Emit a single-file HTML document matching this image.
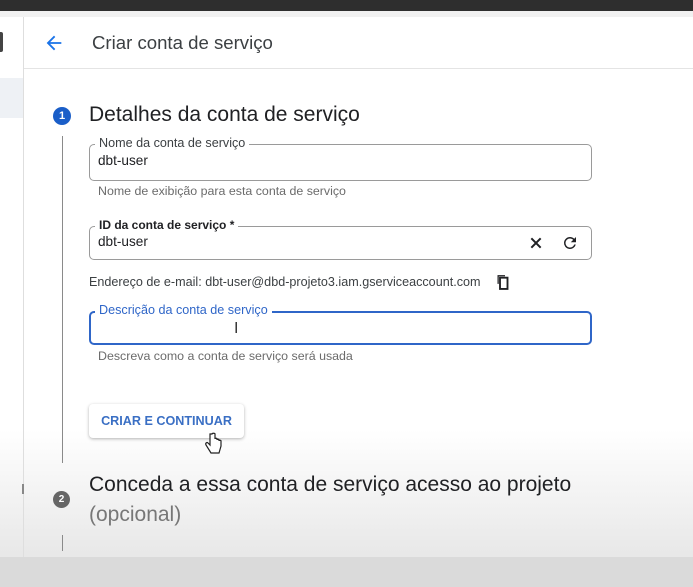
<!DOCTYPE html>
<html><head><meta charset="utf-8"><style>
*{margin:0;padding:0;box-sizing:border-box}
body{width:693px;height:587px;overflow:hidden;position:relative;font-family:"Liberation Sans",sans-serif;background:#fff;color:#202124}
.a{position:absolute}
.fld{position:absolute;left:89px;width:503px;border:1px solid #9a9a9a;border-radius:5px}
.lbl{position:absolute;left:5px;top:-9px;background:#fff;padding:0 4px;font-size:12.6px;color:#3c4043;white-space:nowrap}
.val{position:absolute;left:8px;font-size:13.6px;color:#202124}
.help{position:absolute;left:98px;font-size:12.4px;color:#6b6b6b}
</style></head><body>
<div class="a" style="left:0;top:0;width:693px;height:11px;background:#2e2e2e"></div>
<div class="a" style="left:0;top:11px;width:693px;height:6px;background:#f1f1f1"></div>
<div class="a" style="left:0;top:430px;width:693px;height:135px;background:linear-gradient(#fff,#e6e6e6)"></div>
<div class="a" style="left:0;top:557px;width:693px;height:30px;background:#dadada"></div>
<div class="a" style="left:0;top:78px;width:23px;height:40px;background:#eef1f5"></div>
<div class="a" style="left:0;top:32px;width:3px;height:20px;background:#444;border-radius:0 2px 2px 0"></div>
<div class="a" style="left:23px;top:17px;width:1px;height:540px;background:#dedede"></div>
<div class="a" style="left:24px;top:68px;width:669px;height:1px;background:#e4e4e4"></div>
<svg class="a" style="left:43px;top:32px" width="22" height="22" viewBox="0 0 24 24"><path d="M20 11H7.8l5.6-5.6L12 4l-8 8 8 8 1.4-1.4L7.8 13H20z" fill="#1a73e8"/></svg>
<div class="a" style="left:92px;top:32px;font-size:18.6px;color:#3c4043">Criar conta de serviço</div>
<div class="a" style="left:53px;top:107px;width:18px;height:18px;border-radius:50%;background:#1a5ec8;color:#fff;font-size:11px;font-weight:bold;text-align:center;line-height:18px">1</div>
<div class="a" style="left:89px;top:103px;font-size:21px;color:#202124">Detalhes da conta de serviço</div>
<div class="a" style="left:62px;top:136px;width:1px;height:327px;background:#8a8a8a"></div>
<div class="fld" style="top:144px;height:37px"><div class="lbl">Nome da conta de serviço</div><div class="val" style="top:8px">dbt-user</div></div>
<div class="help" style="top:184px">Nome de exibição para esta conta de serviço</div>
<div class="fld" style="top:226px;height:34px"><div class="lbl" style="color:#202124;font-weight:bold;font-size:12px">ID da conta de serviço *</div><div class="val" style="top:7px">dbt-user</div>
<svg class="a" style="left:438px;top:8px" width="16" height="16" viewBox="0 0 24 24"><path d="M5 5L19 19M19 5L5 19" stroke="#202124" stroke-width="3"/></svg>
<svg class="a" style="left:471px;top:7px" width="18" height="18" viewBox="0 0 24 24"><path d="M17.65 6.35A7.96 7.96 0 0 0 12 4a8 8 0 1 0 7.73 10h-2.08A6 6 0 1 1 12 6c1.66 0 3.14.69 4.22 1.78L13 11h7V4z" fill="#202124"/></svg></div>
<div class="a" style="left:89px;top:275px;font-size:12.6px;color:#3c4043">Endereço de e-mail: dbt-user@dbd-projeto3.iam.gserviceaccount.com</div>
<svg class="a" style="left:495px;top:274px" width="15" height="16" viewBox="0 0 24 24"><path d="M16 1H4v14h2V3h10z" fill="#202124"/><path d="M8 5h12v18H8z" fill="none" stroke="#202124" stroke-width="3"/></svg>
<div class="fld" style="top:311px;height:34px;border:2px solid #2f66c8"><div class="lbl" style="color:#2f66c8;top:-10px;left:4px">Descrição da conta de serviço</div>
<div class="a" style="left:143px;top:7px;font-size:16px;color:#333">I</div></div>
<div class="help" style="top:349px">Descreva como a conta de serviço será usada</div>
<div class="a" style="left:89px;top:404px;width:155px;height:34px;border-radius:4px;background:#fff;box-shadow:0 1px 3px rgba(0,0,0,.3);color:#3a6fc4;font-size:12.6px;font-weight:bold;text-align:center;line-height:34px">CRIAR E CONTINUAR</div>
<svg class="a" style="left:204px;top:432px" width="18" height="24" viewBox="0 0 18 24"><path d="M6 2v11l-2-2c-1-1-3 0-2 2l5 8h8l2-7V9c0-1-2-1-2 0V8c0-1-2-1-2 0V7c0-1-2-1-2 0V2c0-1-3-1-3 0z" fill="#fff" stroke="#222" stroke-width="1.2"/></svg>
<div class="a" style="left:53px;top:491px;width:17px;height:17px;border-radius:50%;background:#666;color:#fff;font-size:10px;font-weight:bold;text-align:center;line-height:17px">2</div>
<div class="a" style="left:89px;top:473px;font-size:21px;color:#202124">Conceda a essa conta de serviço acesso ao projeto</div>
<div class="a" style="left:89px;top:503px;font-size:21px;color:#777">(opcional)</div>
<div class="a" style="left:62px;top:535px;width:1px;height:16px;background:#8a8a8a"></div>
<div class="a" style="left:22px;top:484px;width:2px;height:10px;background:#888"></div>
</body></html>
